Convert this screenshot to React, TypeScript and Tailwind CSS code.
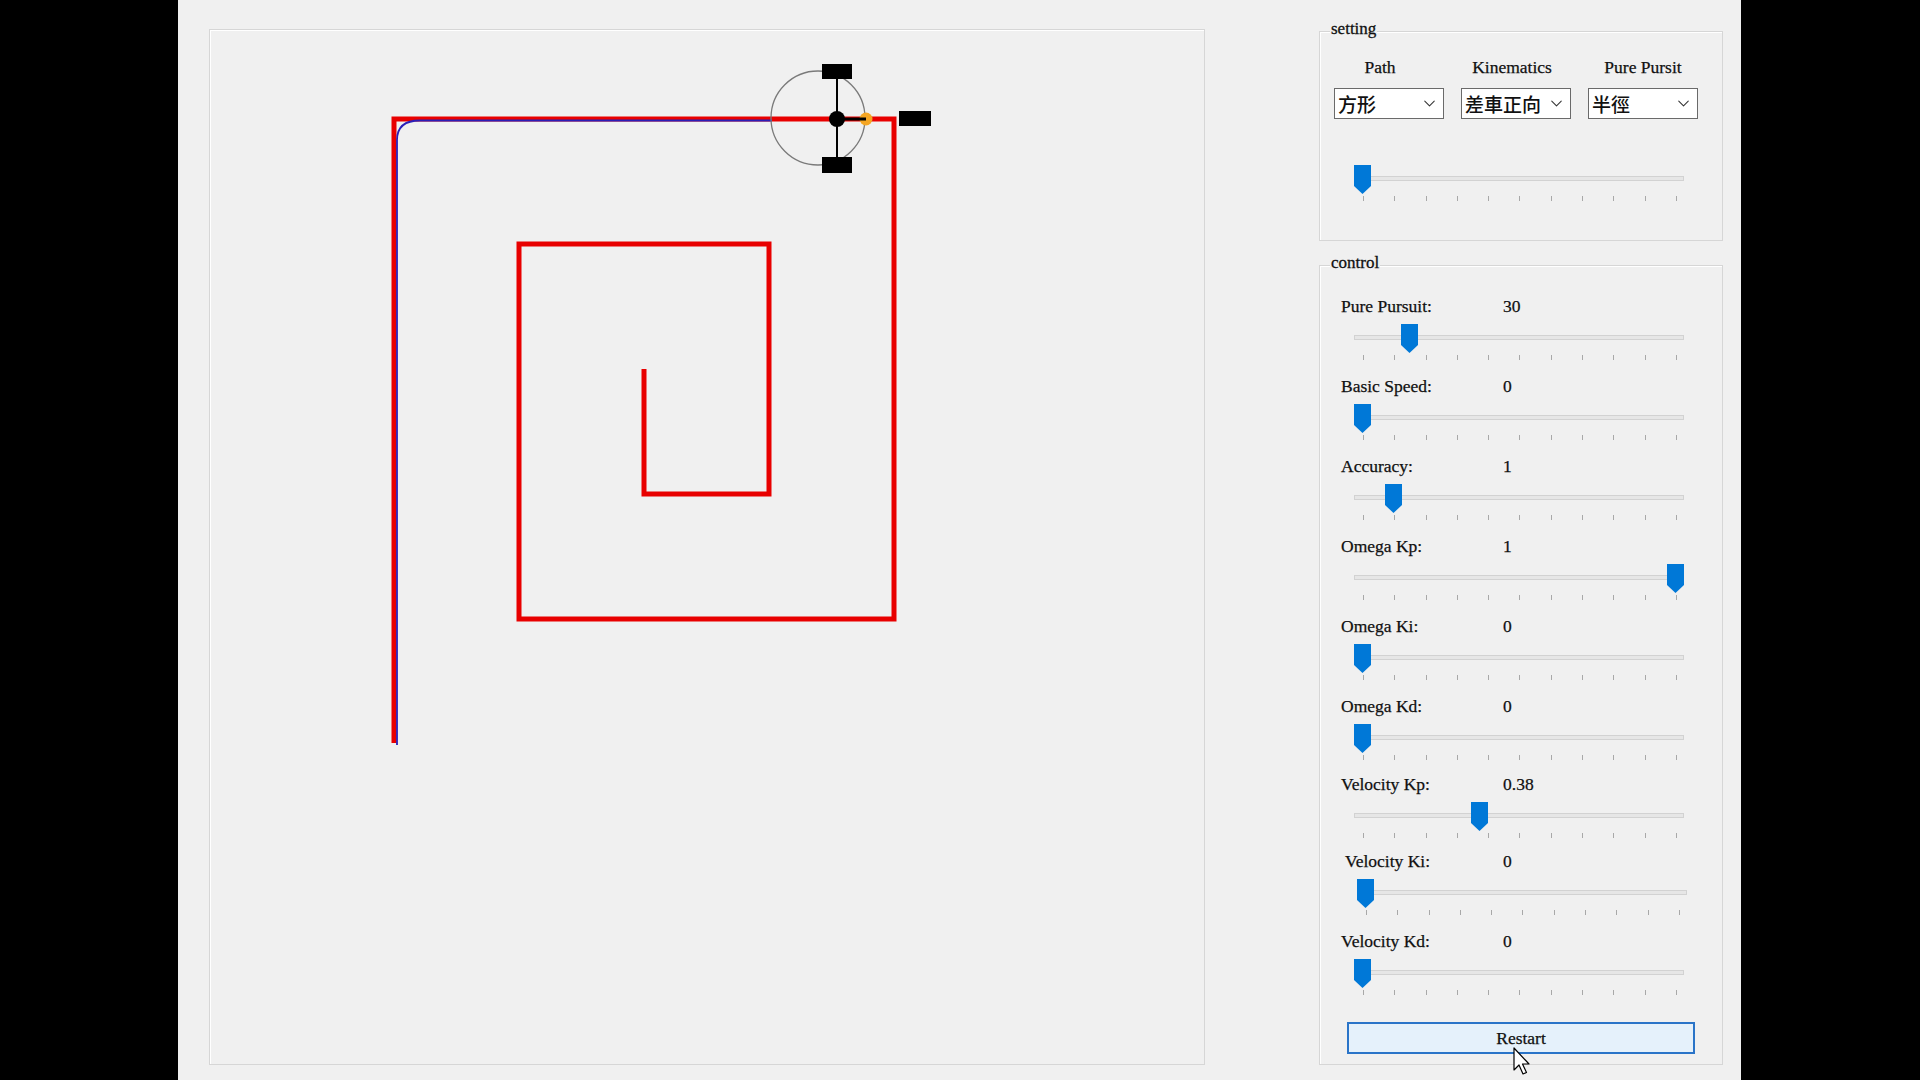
import { ChevronDown } from 'lucide-react';

const serif = "font-['Liberation_Serif','Noto_Sans_CJK_TC',serif]";

const rows = [
  { label: 'Pure Pursuit:', value: '30', frac: 0.15, h: 'h-[80px]' },
  { label: 'Basic Speed:', value: '0', frac: 0, h: 'h-[80px]' },
  { label: 'Accuracy:', value: '1', frac: 0.1, h: 'h-[80px]' },
  { label: 'Omega Kp:', value: '1', frac: 1, h: 'h-[80px]' },
  { label: 'Omega Ki:', value: '0', frac: 0, h: 'h-[80px]' },
  { label: 'Omega Kd:', value: '0', frac: 0, h: 'h-[78px]' },
  { label: 'Velocity Kp:', value: '0.38', frac: 0.375, h: 'h-[77px]' },
  { label: 'Velocity Ki:', value: '0', frac: 0, h: 'h-[80px]', shifted: true },
  { label: 'Velocity Kd:', value: '0', frac: 0, h: 'h-[80px]' },
];

function Slider({ frac }: { frac: number }) {
  return (
    <div className="relative w-[330px] h-[38px]">
      <div className="absolute left-0 right-0 top-[11px] h-[5px] border border-[#d2d2d2] bg-[#e6e6e6]" />
      <svg
        className="absolute top-0"
        style={{ left: frac * 313 }}
        width={17}
        height={29}
        viewBox="0 0 17 29"
      >
        <polygon points="0,0 17,0 17,21 8.5,29 0,21" fill="#0078d7" />
      </svg>
      <div className="absolute left-[9px] w-[314px] top-[31px] flex justify-between">
        {Array.from({ length: 11 }).map((_, i) => (
          <div key={i} className="w-px h-[5px] bg-[#a8a8a8]" />
        ))}
      </div>
    </div>
  );
}

function Dropdown({ text }: { text: string }) {
  return (
    <div className="w-[110px] h-[31px] border border-[#6a6a6a] bg-white flex items-center justify-between pl-[3px] pr-[4px]">
      <span className="text-[19px] leading-none text-[#111] font-['Noto_Sans_CJK_TC',sans-serif] font-medium">{text}</span>
      <ChevronDown size={19} strokeWidth={1.3} className="text-[#333]" />
    </div>
  );
}

function GroupBox({ title, className, children }: { title: string; className: string; children: React.ReactNode }) {
  return (
    <div className={`relative border border-[#d6d6d6] shadow-[inset_1px_1px_0_#ffffff] ${className}`}>
      <span className="absolute -top-[14px] left-[10px] bg-[#f0f0f0] px-px text-[17px] leading-[22px] text-[#111] [-webkit-text-stroke:0.3px_#111]">
        {title}
      </span>
      {children}
    </div>
  );
}

function Canvas() {
  return (
    <div className="ml-[31px] mt-[29px] w-[996px] h-[1036px] border border-[#d6d6d6] shadow-[inset_1px_1px_0_#ffffff]">
      <svg width={994} height={1034} viewBox="210 30 994 1034">
        <polyline
          points="644,369 644,494 769,494 769,244 519,244 519,619 894,619 894,119 394,119 394,743"
          fill="none"
          stroke="#e80000"
          strokeWidth={5}
          strokeLinejoin="miter"
        />
        <path
          d="M397,745 L397,140 Q397,120.5 420,120.5 L772,120.5"
          fill="none"
          stroke="#2a1fb8"
          strokeWidth={1.8}
        />
        <circle cx={818} cy={118} r={47} fill="none" stroke="#7a7a7a" strokeWidth={1.3} />
        <line x1={837} y1={72} x2={837} y2={165} stroke="#000" strokeWidth={2} />
        <rect x={822} y={64} width={30} height={15} fill="#000" />
        <rect x={822} y={157} width={30} height={16} fill="#000" />
        <circle cx={866} cy={119} r={6.5} fill="#f5a623" />
        <line x1={837} y1={119} x2={866} y2={119} stroke="#000" strokeWidth={3} />
        <circle cx={837} cy={119} r={8} fill="#000" />
        <rect x={899} y={111} width={32} height={15} fill="#000" />
      </svg>
    </div>
  );
}

export default function App() {
  return (
    <div className={`w-[1920px] h-[1080px] bg-black flex overflow-hidden ${serif}`}>
      <div className="ml-[178px] w-[1563px] h-full bg-[#f0f0f0] flex text-[#111] [-webkit-text-stroke:0.25px_#111]">
        <Canvas />

        <div className="ml-[114px] mt-[31px] w-[404px] flex flex-col">
          {/* setting */}
          <GroupBox title="setting" className="h-[210px]">
            <div className="pl-[14px] pt-[23px] flex gap-[17px]">
              <div className="flex flex-col items-center">
                <span className="text-[17.5px] leading-[24px] pr-[18px]">Path</span>
                <div className="mt-[9px] [-webkit-text-stroke:0]">
                  <Dropdown text="方形" />
                </div>
              </div>
              <div className="flex flex-col items-center">
                <span className="text-[17.5px] leading-[24px] pr-[8px]">Kinematics</span>
                <div className="mt-[9px] [-webkit-text-stroke:0]">
                  <Dropdown text="差車正向" />
                </div>
              </div>
              <div className="flex flex-col items-center">
                <span className="text-[17.5px] leading-[24px]">Pure Pursit</span>
                <div className="mt-[9px] [-webkit-text-stroke:0]">
                  <Dropdown text="半徑" />
                </div>
              </div>
            </div>
            <div className="ml-[34px] mt-[46px]">
              <Slider frac={0} />
            </div>
          </GroupBox>

          {/* control */}
          <GroupBox title="control" className="mt-[24px] h-[800px]">
            <div className="pl-[21px] pt-[28px] flex flex-col">
              {rows.map((r) => (
                <div key={r.label} className={`${r.h} flex flex-col`}>
                  <div className="h-[24px] flex items-center text-[17.5px] leading-[24px]">
                    <span className={r.shifted ? 'w-[162px] pl-[4px]' : 'w-[162px]'}>{r.label}</span>
                    <span>{r.value}</span>
                  </div>
                  <div className={r.shifted ? 'ml-[16px] mt-[6px]' : 'ml-[13px] mt-[6px]'}>
                    <Slider frac={r.frac} />
                  </div>
                </div>
              ))}
              <div className="relative ml-[6px] mt-[13px] w-[348px] h-[32px] border-2 border-[#2a74c8] bg-[#e5f1fb] flex items-center justify-center text-[17.5px]">
                Restart
                <svg
                  className="absolute left-[164px] top-[23px]"
                  width={20}
                  height={30}
                  viewBox="0 0 20 30"
                >
                  <path
                    d="M1,1 L1,23 L6,18 L10,27 L13.5,25.5 L9.5,17 L16,17 Z"
                    fill="#fff"
                    stroke="#000"
                    strokeWidth={1.2}
                    strokeLinejoin="round"
                  />
                </svg>
              </div>
            </div>
          </GroupBox>
        </div>
      </div>
    </div>
  );
}
